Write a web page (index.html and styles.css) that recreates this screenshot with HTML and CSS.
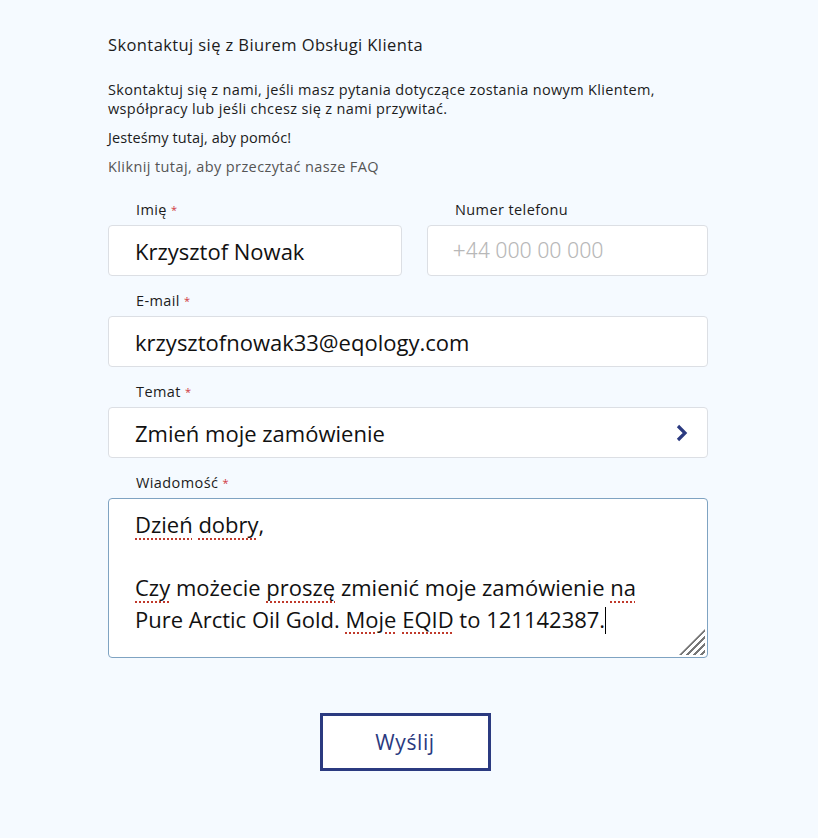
FILE: index.html
```html
<!DOCTYPE html>
<html lang="pl">
<head>
  <meta charset="UTF-8" />
  <meta name="viewport" content="width=device-width, initial-scale=1.0"/>
  <title>Kontakt</title>
  <link rel="stylesheet" href="styles.css">
</head>
<body>
  <div class="container">
    <h1>Skontaktuj się z Biurem Obsługi Klienta</h1>
    <p class="intro">Skontaktuj się z nami, jeśli masz pytania dotyczące zostania nowym Klientem, współpracy lub jeśli chcesz się z nami przywitać.</p>
    <p>Jesteśmy tutaj, aby pomóc!</p>
    <p class="faq">Kliknij tutaj, aby przeczytać nasze FAQ</p>

    <form class="contact-form">
      <div class="row">
        <div class="field">
          <label>Imię <span class="req">*</span></label>
          <div class="input">Krzysztof Nowak</div>
        </div>
        <div class="field">
          <label>Numer telefonu</label>
          <div class="input placeholder">+44 000 00 000</div>
        </div>
      </div>

      <div class="field">
        <label>E-mail <span class="req">*</span></label>
        <div class="input">krzysztofnowak33@eqology.com</div>
      </div>

      <div class="field">
        <label>Temat <span class="req">*</span></label>
        <div class="input select">
          <span>Zmień moje zamówienie</span>
          <svg class="chevron" width="14" height="18" viewBox="0 0 14 18">
            <path d="M3 2 L10 9 L3 16" fill="none" stroke="#2b3a80" stroke-width="3.2"/>
          </svg>
        </div>
      </div>

      <div class="field">
        <label>Wiadomość <span class="req">*</span></label>
        <div class="textarea">
          <span class="typo">Dzień</span> <span class="typo">dobry</span>,<br><br>
          <span class="typo">Czy</span> możecie <span class="typo">proszę</span> zmienić moje zamówienie <span class="typo">na</span><br>
          Pure Arctic Oil Gold. <span class="typo">Moje</span> <span class="typo">EQID</span> to 121142387.<span class="caret"></span>
          <span class="grip"></span>
        </div>
      </div>

      <div class="actions">
        <button type="submit">Wyślij</button>
      </div>
    </form>
  </div>
</body>
</html>
```

FILE: styles.css
```css
body {
  font-family: "Open Sans", "Noto Sans", sans-serif;
  background: #f5faff;
  color: #1c1c1c;
  margin: 0;
  padding: 0 2px 0 0;
}

.container {
  width: 600px;
  margin: 0 auto;
  padding-top: 34px;
}

h1 {
  font-size: 16.5px;
  font-weight: 400;
  letter-spacing: 0.4px;
  line-height: 22px;
  margin: 0 0 24px 0;
}

p {
  font-size: 14.5px;
  letter-spacing: 0.1px;
  line-height: 19px;
  margin: 0 0 10px 0;
}

.intro {
  letter-spacing: 0.35px;
  max-width: 580px;
}

.faq {
  color: #555;
  letter-spacing: 0.4px;
  margin-bottom: 24px;
}

.row {
  display: grid;
  grid-template-columns: 294px 1fr;
  gap: 25px;
}

.field {
  margin-bottom: 15px;
}

label {
  display: block;
  height: 20px;
  font-size: 14.5px;
  font-weight: 500;
  letter-spacing: 0.4px;
  line-height: 20px;
  margin: 0 0 5px 28px;
}

.req {
  color: #d0383e;
  font-size: 11px;
  vertical-align: top;
}

.input {
  box-sizing: border-box;
  height: 51px;
  background: #fff;
  border: 1px solid #dcdfe4;
  border-radius: 4px;
  padding: 0 26px;
  display: flex;
  align-items: center;
  font-family: "Open Sans", sans-serif;
  font-size: 22px;
  color: #111;
}

.placeholder {
  font-family: Roboto, sans-serif;
  font-weight: 300;
  color: #b8b8b8;
  padding-left: 25px;
}

.select {
  justify-content: space-between;
  padding-right: 18px;
}

.textarea {
  position: relative;
  box-sizing: border-box;
  height: 160px;
  background: #fff;
  border: 1px solid #7fa3c2;
  border-radius: 4px;
  padding: 10px 26px;
  font-family: "Open Sans", sans-serif;
  font-size: 22px;
  line-height: 31.5px;
  color: #111;
}

.typo {
  text-decoration: underline dotted #c0392b;
  text-underline-offset: 5px;
  text-decoration-thickness: 2px;
}

.caret {
  display: inline-block;
  width: 1px;
  height: 27px;
  background: #000;
  vertical-align: -6px;
}

.grip {
  position: absolute;
  right: 2px;
  bottom: 2px;
  width: 26px;
  height: 26px;
  background: repeating-linear-gradient(135deg, transparent 0 3px, #777 3px 5px);
  clip-path: polygon(100% 0, 100% 100%, 0 100%);
}

.actions {
  display: flex;
  justify-content: center;
  padding-top: 40px;
}

button {
  width: 171px;
  height: 58px;
  background: #fff;
  border: 3px solid #2b3a80;
  color: #2b3a80;
  font-family: "Open Sans", sans-serif;
  font-size: 21px;
  letter-spacing: 0.6px;
  cursor: pointer;
  margin-right: 6px;
}
```
